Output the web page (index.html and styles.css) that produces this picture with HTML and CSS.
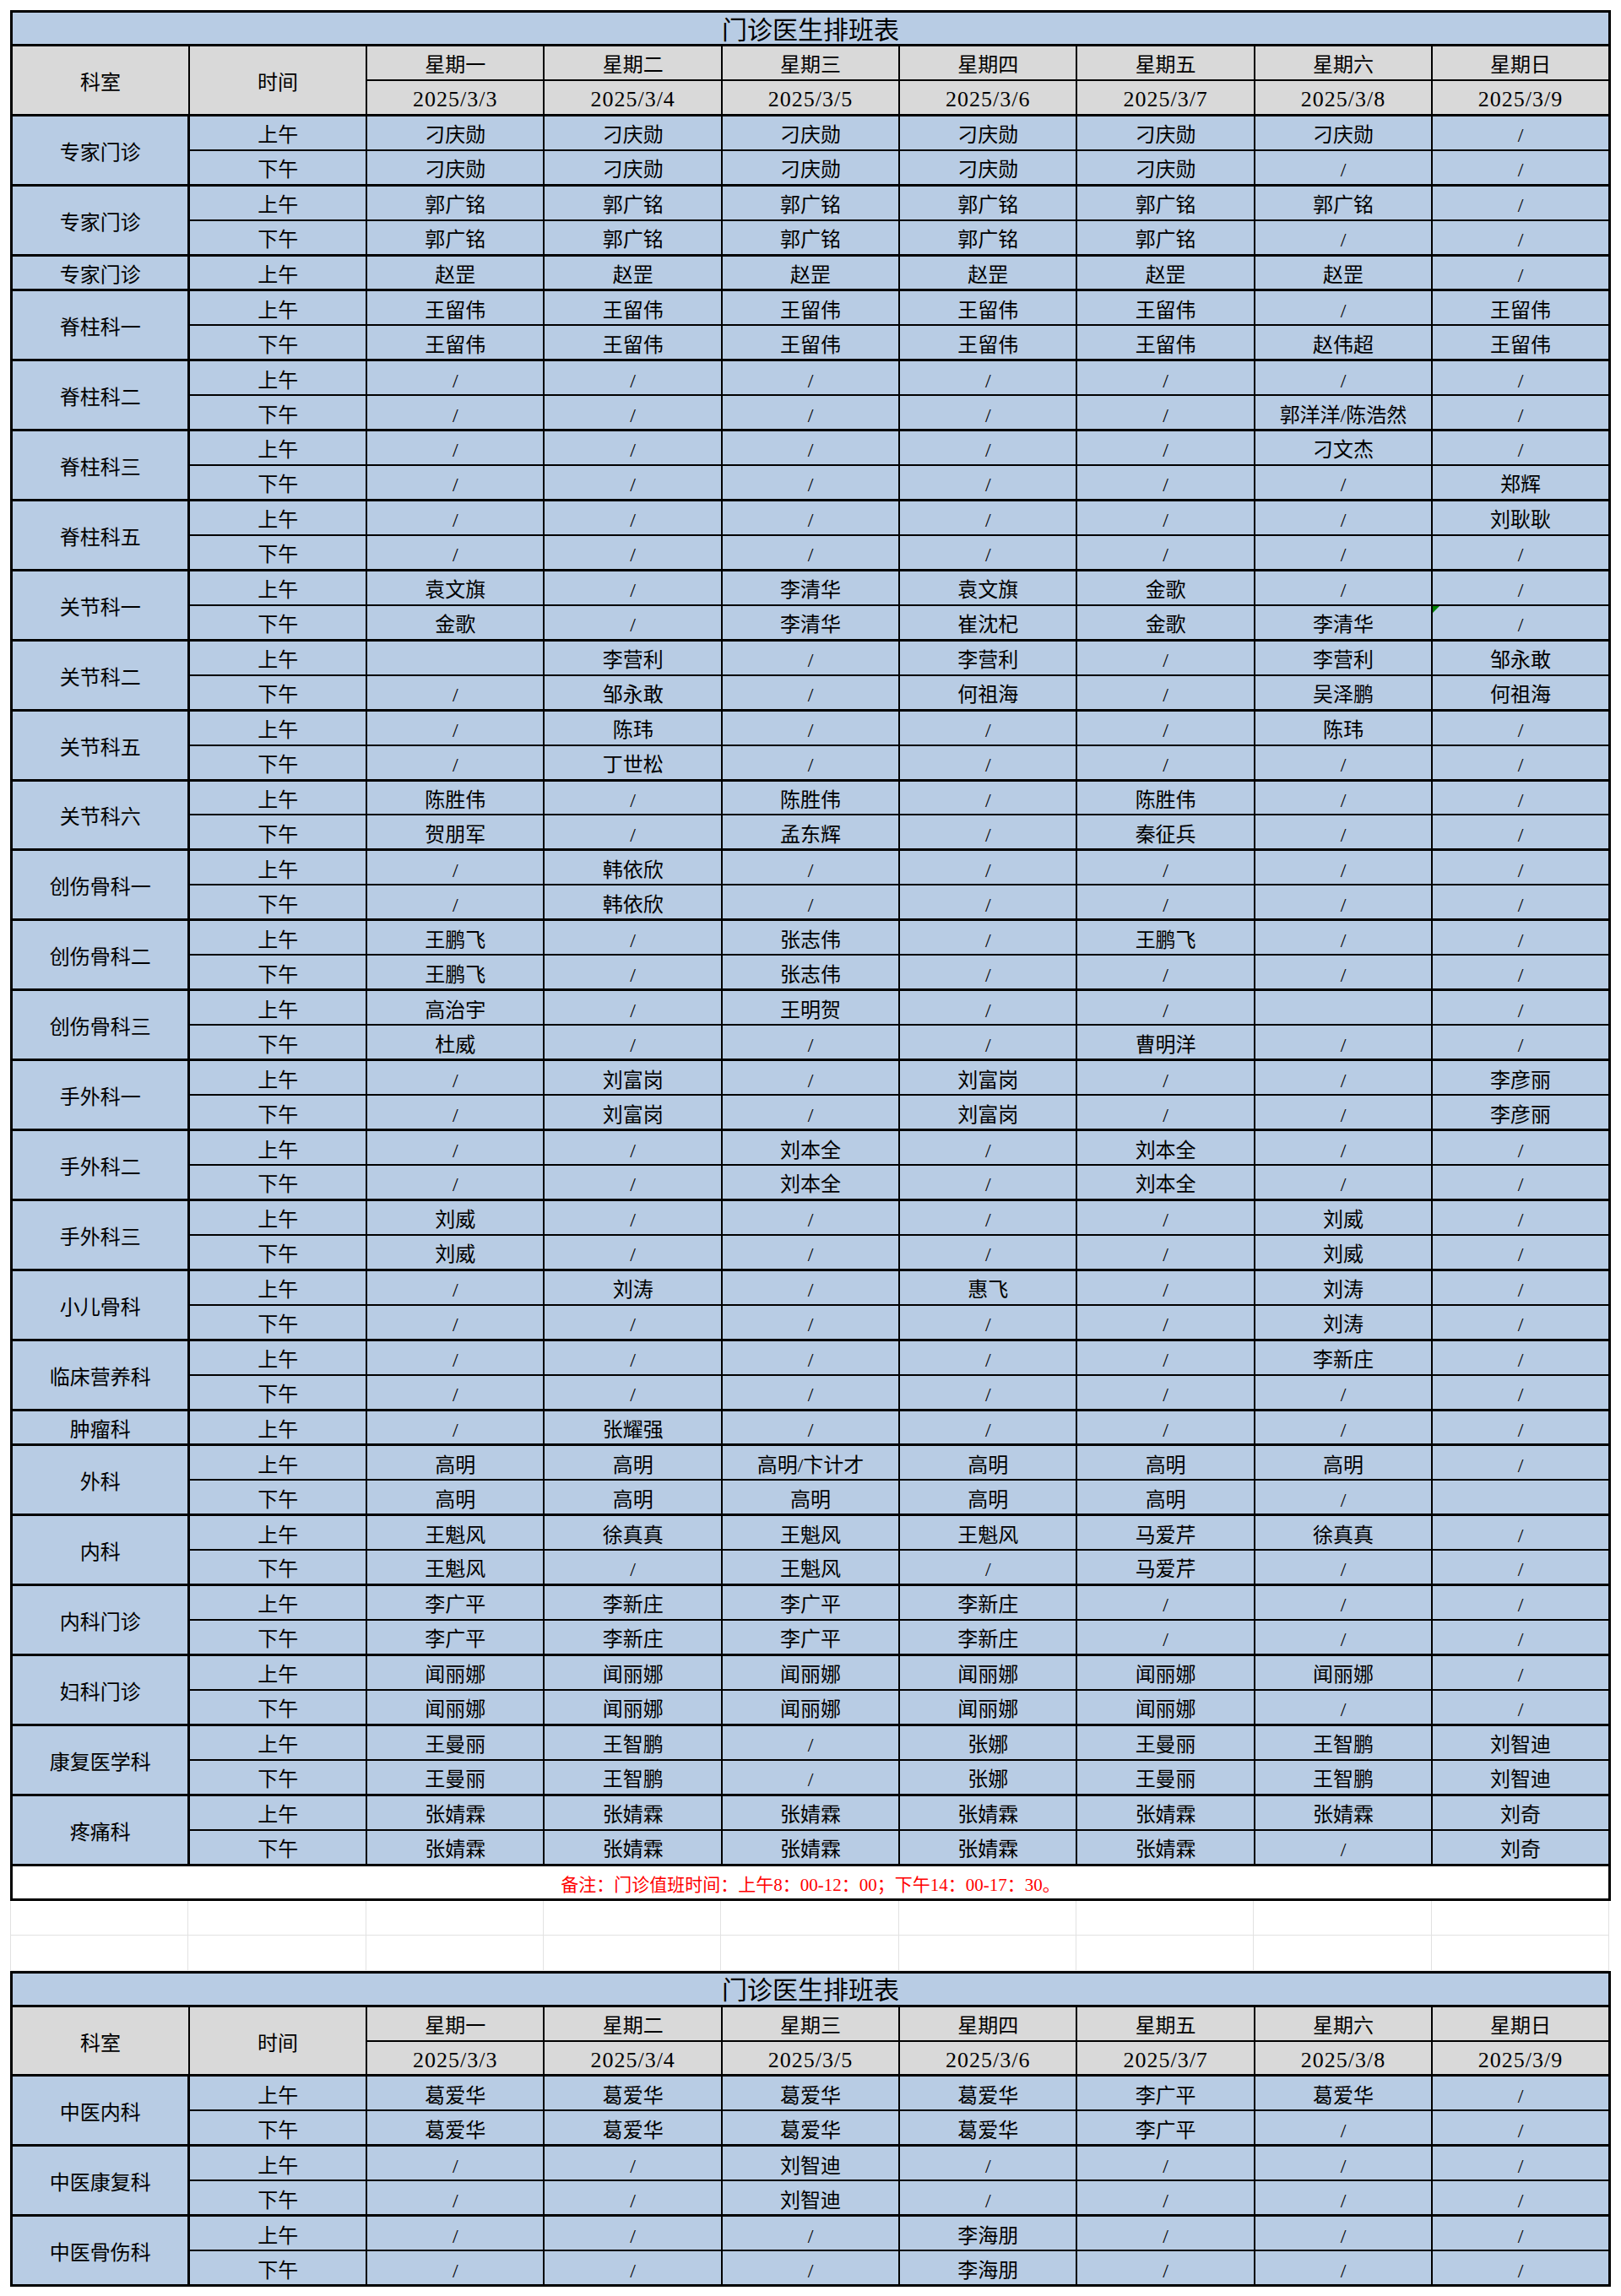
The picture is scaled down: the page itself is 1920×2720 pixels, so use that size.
FILE: index.html
```html
<!DOCTYPE html>
<html lang="zh-CN">
<head>
<meta charset="utf-8">
<title>门诊医生排班表</title>
<link rel="stylesheet" href="styles.css">
</head>
<body>
<div class="page">
<table class="sheet">
<colgroup><col><col><col><col><col><col><col><col><col></colgroup>
<tr class="title"><td colspan="9">门诊医生排班表</td></tr>
<tr class="head"><td rowspan="2">科室</td><td rowspan="2">时间</td><td>星期一</td><td>星期二</td><td>星期三</td><td>星期四</td><td>星期五</td><td>星期六</td><td>星期日</td></tr>
<tr class="head date"><td>2025/3/3</td><td>2025/3/4</td><td>2025/3/5</td><td>2025/3/6</td><td>2025/3/7</td><td>2025/3/8</td><td>2025/3/9</td></tr>

<tr class="g"><td class="dept" rowspan="2">专家门诊</td><td>上午</td><td>刁庆勋</td><td>刁庆勋</td><td>刁庆勋</td><td>刁庆勋</td><td>刁庆勋</td><td>刁庆勋</td><td>/</td></tr>
<tr><td>下午</td><td>刁庆勋</td><td>刁庆勋</td><td>刁庆勋</td><td>刁庆勋</td><td>刁庆勋</td><td>/</td><td>/</td></tr>

<tr class="g"><td class="dept" rowspan="2">专家门诊</td><td>上午</td><td>郭广铭</td><td>郭广铭</td><td>郭广铭</td><td>郭广铭</td><td>郭广铭</td><td>郭广铭</td><td>/</td></tr>
<tr><td>下午</td><td>郭广铭</td><td>郭广铭</td><td>郭广铭</td><td>郭广铭</td><td>郭广铭</td><td>/</td><td>/</td></tr>

<tr class="g"><td class="dept">专家门诊</td><td>上午</td><td>赵罡</td><td>赵罡</td><td>赵罡</td><td>赵罡</td><td>赵罡</td><td>赵罡</td><td>/</td></tr>

<tr class="g"><td class="dept" rowspan="2">脊柱科一</td><td>上午</td><td>王留伟</td><td>王留伟</td><td>王留伟</td><td>王留伟</td><td>王留伟</td><td>/</td><td>王留伟</td></tr>
<tr><td>下午</td><td>王留伟</td><td>王留伟</td><td>王留伟</td><td>王留伟</td><td>王留伟</td><td>赵伟超</td><td>王留伟</td></tr>

<tr class="g"><td class="dept" rowspan="2">脊柱科二</td><td>上午</td><td>/</td><td>/</td><td>/</td><td>/</td><td>/</td><td>/</td><td>/</td></tr>
<tr><td>下午</td><td>/</td><td>/</td><td>/</td><td>/</td><td>/</td><td>郭洋洋/陈浩然</td><td>/</td></tr>

<tr class="g"><td class="dept" rowspan="2">脊柱科三</td><td>上午</td><td>/</td><td>/</td><td>/</td><td>/</td><td>/</td><td>刁文杰</td><td>/</td></tr>
<tr><td>下午</td><td>/</td><td>/</td><td>/</td><td>/</td><td>/</td><td>/</td><td>郑辉</td></tr>

<tr class="g"><td class="dept" rowspan="2">脊柱科五</td><td>上午</td><td>/</td><td>/</td><td>/</td><td>/</td><td>/</td><td>/</td><td>刘耿耿</td></tr>
<tr><td>下午</td><td>/</td><td>/</td><td>/</td><td>/</td><td>/</td><td>/</td><td>/</td></tr>

<tr class="g"><td class="dept" rowspan="2">关节科一</td><td>上午</td><td>袁文旗</td><td>/</td><td>李清华</td><td>袁文旗</td><td>金歌</td><td>/</td><td>/</td></tr>
<tr><td>下午</td><td>金歌</td><td>/</td><td>李清华</td><td>崔沈杞</td><td>金歌</td><td>李清华</td><td class="flag">/</td></tr>

<tr class="g"><td class="dept" rowspan="2">关节科二</td><td>上午</td><td></td><td>李营利</td><td>/</td><td>李营利</td><td>/</td><td>李营利</td><td>邹永敢</td></tr>
<tr><td>下午</td><td>/</td><td>邹永敢</td><td>/</td><td>何祖海</td><td>/</td><td>吴泽鹏</td><td>何祖海</td></tr>

<tr class="g"><td class="dept" rowspan="2">关节科五</td><td>上午</td><td>/</td><td>陈玮</td><td>/</td><td>/</td><td>/</td><td>陈玮</td><td>/</td></tr>
<tr><td>下午</td><td>/</td><td>丁世松</td><td>/</td><td>/</td><td>/</td><td>/</td><td>/</td></tr>

<tr class="g"><td class="dept" rowspan="2">关节科六</td><td>上午</td><td>陈胜伟</td><td>/</td><td>陈胜伟</td><td>/</td><td>陈胜伟</td><td>/</td><td>/</td></tr>
<tr><td>下午</td><td>贺朋军</td><td>/</td><td>孟东辉</td><td>/</td><td>秦征兵</td><td>/</td><td>/</td></tr>

<tr class="g"><td class="dept" rowspan="2">创伤骨科一</td><td>上午</td><td>/</td><td>韩依欣</td><td>/</td><td>/</td><td>/</td><td>/</td><td>/</td></tr>
<tr><td>下午</td><td>/</td><td>韩依欣</td><td>/</td><td>/</td><td>/</td><td>/</td><td>/</td></tr>

<tr class="g"><td class="dept" rowspan="2">创伤骨科二</td><td>上午</td><td>王鹏飞</td><td>/</td><td>张志伟</td><td>/</td><td>王鹏飞</td><td>/</td><td>/</td></tr>
<tr><td>下午</td><td>王鹏飞</td><td>/</td><td>张志伟</td><td>/</td><td>/</td><td>/</td><td>/</td></tr>

<tr class="g"><td class="dept" rowspan="2">创伤骨科三</td><td>上午</td><td>高治宇</td><td>/</td><td>王明贺</td><td>/</td><td>/</td><td></td><td>/</td></tr>
<tr><td>下午</td><td>杜威</td><td>/</td><td>/</td><td>/</td><td>曹明洋</td><td>/</td><td>/</td></tr>

<tr class="g"><td class="dept" rowspan="2">手外科一</td><td>上午</td><td>/</td><td>刘富岗</td><td>/</td><td>刘富岗</td><td>/</td><td>/</td><td>李彦丽</td></tr>
<tr><td>下午</td><td>/</td><td>刘富岗</td><td>/</td><td>刘富岗</td><td>/</td><td>/</td><td>李彦丽</td></tr>

<tr class="g"><td class="dept" rowspan="2">手外科二</td><td>上午</td><td>/</td><td>/</td><td>刘本全</td><td>/</td><td>刘本全</td><td>/</td><td>/</td></tr>
<tr><td>下午</td><td>/</td><td>/</td><td>刘本全</td><td>/</td><td>刘本全</td><td>/</td><td>/</td></tr>

<tr class="g"><td class="dept" rowspan="2">手外科三</td><td>上午</td><td>刘威</td><td>/</td><td>/</td><td>/</td><td>/</td><td>刘威</td><td>/</td></tr>
<tr><td>下午</td><td>刘威</td><td>/</td><td>/</td><td>/</td><td>/</td><td>刘威</td><td>/</td></tr>

<tr class="g"><td class="dept" rowspan="2">小儿骨科</td><td>上午</td><td>/</td><td>刘涛</td><td>/</td><td>惠飞</td><td>/</td><td>刘涛</td><td>/</td></tr>
<tr><td>下午</td><td>/</td><td>/</td><td>/</td><td>/</td><td>/</td><td>刘涛</td><td>/</td></tr>

<tr class="g"><td class="dept" rowspan="2">临床营养科</td><td>上午</td><td>/</td><td>/</td><td>/</td><td>/</td><td>/</td><td>李新庄</td><td>/</td></tr>
<tr><td>下午</td><td>/</td><td>/</td><td>/</td><td>/</td><td>/</td><td>/</td><td>/</td></tr>

<tr class="g"><td class="dept">肿瘤科</td><td>上午</td><td>/</td><td>张耀强</td><td>/</td><td>/</td><td>/</td><td>/</td><td>/</td></tr>

<tr class="g"><td class="dept" rowspan="2">外科</td><td>上午</td><td>高明</td><td>高明</td><td>高明/卞计才</td><td>高明</td><td>高明</td><td>高明</td><td>/</td></tr>
<tr><td>下午</td><td>高明</td><td>高明</td><td>高明</td><td>高明</td><td>高明</td><td>/</td><td></td></tr>

<tr class="g"><td class="dept" rowspan="2">内科</td><td>上午</td><td>王魁风</td><td>徐真真</td><td>王魁风</td><td>王魁风</td><td>马爱芹</td><td>徐真真</td><td>/</td></tr>
<tr><td>下午</td><td>王魁风</td><td>/</td><td>王魁风</td><td>/</td><td>马爱芹</td><td>/</td><td>/</td></tr>

<tr class="g"><td class="dept" rowspan="2">内科门诊</td><td>上午</td><td>李广平</td><td>李新庄</td><td>李广平</td><td>李新庄</td><td>/</td><td>/</td><td>/</td></tr>
<tr><td>下午</td><td>李广平</td><td>李新庄</td><td>李广平</td><td>李新庄</td><td>/</td><td>/</td><td>/</td></tr>

<tr class="g"><td class="dept" rowspan="2">妇科门诊</td><td>上午</td><td>闻丽娜</td><td>闻丽娜</td><td>闻丽娜</td><td>闻丽娜</td><td>闻丽娜</td><td>闻丽娜</td><td>/</td></tr>
<tr><td>下午</td><td>闻丽娜</td><td>闻丽娜</td><td>闻丽娜</td><td>闻丽娜</td><td>闻丽娜</td><td>/</td><td>/</td></tr>

<tr class="g"><td class="dept" rowspan="2">康复医学科</td><td>上午</td><td>王曼丽</td><td>王智鹏</td><td>/</td><td>张娜</td><td>王曼丽</td><td>王智鹏</td><td>刘智迪</td></tr>
<tr><td>下午</td><td>王曼丽</td><td>王智鹏</td><td>/</td><td>张娜</td><td>王曼丽</td><td>王智鹏</td><td>刘智迪</td></tr>

<tr class="g"><td class="dept" rowspan="2">疼痛科</td><td>上午</td><td>张婧霖</td><td>张婧霖</td><td>张婧霖</td><td>张婧霖</td><td>张婧霖</td><td>张婧霖</td><td>刘奇</td></tr>
<tr><td>下午</td><td>张婧霖</td><td>张婧霖</td><td>张婧霖</td><td>张婧霖</td><td>张婧霖</td><td>/</td><td>刘奇</td></tr>

<tr class="g note"><td colspan="9">备注：门诊值班时间：上午8：00-12：00；下午14：00-17：30。</td></tr>
</table>

<div class="gap">
<span></span><span></span><span></span><span></span><span></span><span></span><span></span><span></span><span></span>
<span></span><span></span><span></span><span></span><span></span><span></span><span></span><span></span><span></span>
</div>

<table class="sheet">
<colgroup><col><col><col><col><col><col><col><col><col></colgroup>
<tr class="title"><td colspan="9">门诊医生排班表</td></tr>
<tr class="head"><td rowspan="2">科室</td><td rowspan="2">时间</td><td>星期一</td><td>星期二</td><td>星期三</td><td>星期四</td><td>星期五</td><td>星期六</td><td>星期日</td></tr>
<tr class="head date"><td>2025/3/3</td><td>2025/3/4</td><td>2025/3/5</td><td>2025/3/6</td><td>2025/3/7</td><td>2025/3/8</td><td>2025/3/9</td></tr>

<tr class="g"><td class="dept" rowspan="2">中医内科</td><td>上午</td><td>葛爱华</td><td>葛爱华</td><td>葛爱华</td><td>葛爱华</td><td>李广平</td><td>葛爱华</td><td>/</td></tr>
<tr><td>下午</td><td>葛爱华</td><td>葛爱华</td><td>葛爱华</td><td>葛爱华</td><td>李广平</td><td>/</td><td>/</td></tr>

<tr class="g"><td class="dept" rowspan="2">中医康复科</td><td>上午</td><td>/</td><td>/</td><td>刘智迪</td><td>/</td><td>/</td><td>/</td><td>/</td></tr>
<tr><td>下午</td><td>/</td><td>/</td><td>刘智迪</td><td>/</td><td>/</td><td>/</td><td>/</td></tr>

<tr class="g"><td class="dept" rowspan="2">中医骨伤科</td><td>上午</td><td>/</td><td>/</td><td>/</td><td>李海朋</td><td>/</td><td>/</td><td>/</td></tr>
<tr><td>下午</td><td>/</td><td>/</td><td>/</td><td>李海朋</td><td>/</td><td>/</td><td>/</td></tr>
</table>
</div>
</body>
</html>
```

FILE: styles.css
```css
* {
  box-sizing: border-box;
}

html, body {
  margin: 0;
  padding: 0;
  background: #ffffff;
}

body {
  font-family: "Liberation Serif", "Noto Sans CJK SC", serif;
  color: #000000;
}

.page {
  width: 1920px;
  padding: 12px 0 0 12px;
}

.sheet {
  border-collapse: collapse;
  table-layout: fixed;
  width: 1893px;
  border: 3px solid #000000;
}

.sheet col {
  width: 210.33px;
}

.sheet tr {
  height: 41.46px;
}

.sheet td {
  border: 2px solid #000000;
  background: #b8cce4;
  text-align: center;
  vertical-align: middle;
  font-size: 24px;
  line-height: 1;
  padding: 6px 0 0;
  white-space: nowrap;
  overflow: visible;
}

.sheet tr.g td {
  border-top-width: 3px;
}

.sheet tr.title {
  height: 40px;
}

.sheet tr.title td {
  font-size: 30px;
  padding-top: 4px;
  border-bottom-width: 3px;
}

.sheet tr.head td {
  background: #d9d9d9;
}

.sheet tr.date td {
  font-size: 26px;
  letter-spacing: 1px;
}

.sheet td.dept {
  border-right-width: 3px;
}

.sheet tr.note {
  height: 41px;
}

.sheet tr.note td {
  background: #ffffff;
  color: #ff0000;
  font-size: 21px;
  padding-top: 8px;
  border-bottom-width: 3px;
}

.sheet td.flag {
  position: relative;
}

.sheet td.flag::before {
  content: "";
  position: absolute;
  left: 0;
  top: 0;
  width: 0;
  height: 0;
  border-top: 8px solid #008000;
  border-right: 8px solid transparent;
}

.gap {
  display: grid;
  grid-template-columns: repeat(9, 210.33px);
  grid-auto-rows: 41.5px;
  width: 1893px;
  border-left: 1px solid #e2e2e2;
}

.gap span {
  border-right: 1px solid #e2e2e2;
  border-bottom: 1px solid #e2e2e2;
}
```
